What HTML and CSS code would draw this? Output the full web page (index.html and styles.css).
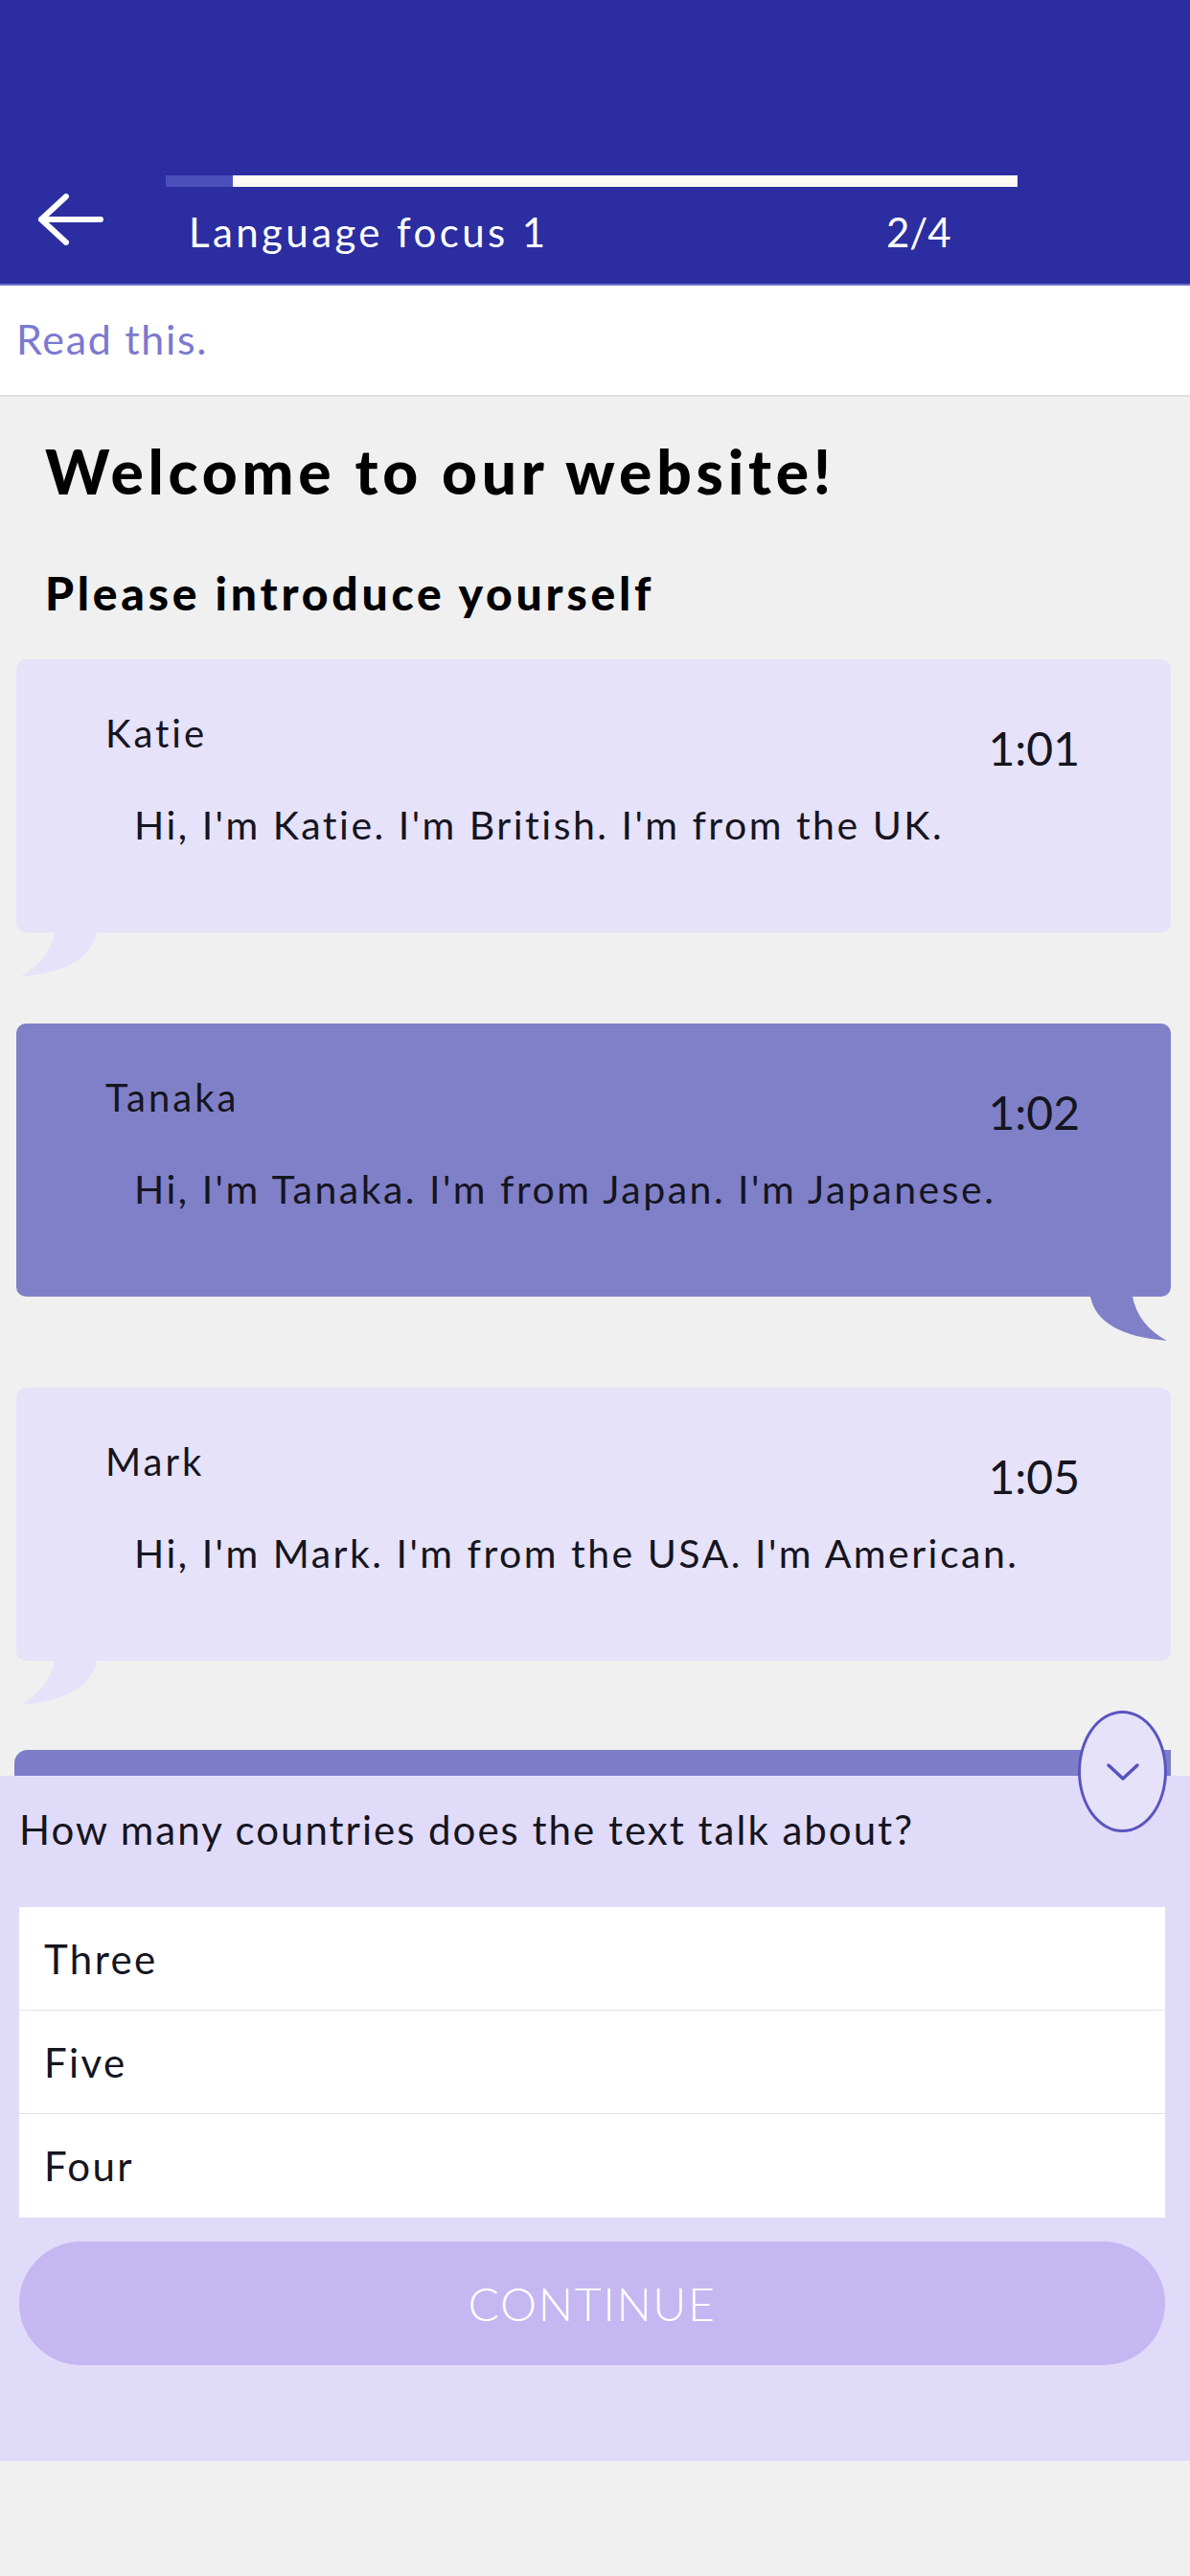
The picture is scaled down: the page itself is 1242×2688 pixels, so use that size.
FILE: index.html
```html
<!DOCTYPE html>
<html lang="en">
<head>
  <meta charset="UTF-8">
  <meta name="viewport" content="width=device-width, initial-scale=1.0">
  <title>Language focus 1</title>
  <link rel="stylesheet" href="styles.css">
</head>
<body>
  <header class="topbar">
    <div class="progress">
      <div class="progress-done"></div>
      <div class="progress-rest"></div>
    </div>
    <div class="topbar-row">
      <svg class="back" width="70" height="54" viewBox="0 0 70 54">
        <path d="M66 27 H4 M30 3 L4 27 L30 51" fill="none" stroke="#FFFFFF" stroke-width="6" stroke-linecap="round" stroke-linejoin="round"/>
      </svg>
      <span class="topbar-title">Language focus 1</span>
      <span class="topbar-count">2/4</span>
    </div>
  </header>

  <div class="instruction">Read this.</div>

  <main class="content">
    <h1>Welcome to our website!</h1>
    <h2>Please introduce yourself</h2>

    <div class="chat">
      <div class="bubble">
        <div class="bubble-head">
          <span class="name">Katie</span>
          <span class="time">1:01</span>
        </div>
        <p class="message">Hi, I'm Katie. I'm British. I'm from the UK.</p>
        <svg class="tail tail-left" width="84" height="48" viewBox="0 0 84 48">
          <path d="M0 0 Q 8 40 80 46 Q 50 30 44 0 Z" fill="#E6E2FA"/>
        </svg>
      </div>

      <div class="bubble bubble-me">
        <div class="bubble-head">
          <span class="name">Tanaka</span>
          <span class="time">1:02</span>
        </div>
        <p class="message">Hi, I'm Tanaka. I'm from Japan. I'm Japanese.</p>
        <svg class="tail tail-right" width="84" height="48" viewBox="0 0 84 48">
          <path d="M0 0 Q 8 40 80 46 Q 50 30 44 0 Z" fill="#8080C8"/>
        </svg>
      </div>

      <div class="bubble">
        <div class="bubble-head">
          <span class="name">Mark</span>
          <span class="time">1:05</span>
        </div>
        <p class="message">Hi, I'm Mark. I'm from the USA. I'm American.</p>
        <svg class="tail tail-left" width="84" height="48" viewBox="0 0 84 48">
          <path d="M0 0 Q 8 40 80 46 Q 50 30 44 0 Z" fill="#E6E2FA"/>
        </svg>
      </div>
    </div>
  </main>

  <section class="quiz">
    <div class="quiz-handle"></div>
    <button class="quiz-toggle">
      <svg width="40" height="24" viewBox="0 0 40 24">
        <path d="M5 5 L20 19 L35 5" fill="none" stroke="#5652BF" stroke-width="3.5" stroke-linecap="round" stroke-linejoin="round"/>
      </svg>
    </button>
    <div class="quiz-body">
      <p class="question">How many countries does the text talk about?</p>
      <ul class="options">
        <li>Three</li>
        <li>Five</li>
        <li>Four</li>
      </ul>
      <button class="continue">CONTINUE</button>
    </div>
  </section>
</body>
</html>
```

FILE: styles.css
```css
body {
  margin: 0;
  font-family: Lato, "Liberation Sans", sans-serif;
  background-color: #F0F0F0;
  color: #15151F;
}

.topbar {
  box-sizing: border-box;
  height: 298px;
  padding-top: 183px;
  background-color: #2B2DA1;
  border-bottom: 2px solid #6F70C9;
  color: #FFFFFF;
}

.progress {
  display: flex;
  width: 889px;
  height: 12px;
  margin-left: 173px;
}

.progress-done {
  width: 70px;
  background-color: #4B4FBB;
}

.progress-rest {
  flex: 1;
  background-color: #FAFAF2;
}

.topbar-row {
  display: flex;
  align-items: flex-start;
  margin-top: 7px;
}

.back {
  margin-left: 39px;
}

.topbar-title,
.topbar-count {
  font-size: 42px;
  line-height: 50px;
  margin-top: 15px;
}

.topbar-title {
  width: 728px;
  margin-left: 88px;
  letter-spacing: 3.4px;
}

.instruction {
  box-sizing: border-box;
  height: 116px;
  padding: 31px 0 0 17px;
  background-color: #FFFFFF;
  border-bottom: 2px solid #E0E0E0;
  color: #7B79CF;
  font-size: 43px;
  line-height: 50px;
  letter-spacing: 1.7px;
}

.content {
  padding: 40px 20px 0 17px;
}

h1 {
  margin: 0 0 0 30px;
  font-size: 64px;
  line-height: 76px;
  font-weight: 900;
  letter-spacing: 4.8px;
  color: #000000;
}

h2 {
  margin: 60px 0 0 30px;
  font-size: 48px;
  line-height: 58px;
  font-weight: 900;
  letter-spacing: 3.8px;
  color: #000000;
}

.chat {
  display: flex;
  flex-direction: column;
  gap: 95px;
  margin-top: 40px;
}

.bubble {
  position: relative;
  box-sizing: border-box;
  height: 285px;
  padding: 53px 95px 0 93px;
  background-color: #E6E2FA;
  border-radius: 10px;
}

.bubble-me {
  background-color: #8080C8;
}

.bubble-head {
  display: flex;
  justify-content: space-between;
  align-items: flex-start;
  height: 68px;
}

.name {
  font-size: 40px;
  line-height: 48px;
  letter-spacing: 3px;
}

.time {
  margin-top: 11px;
  font-size: 48px;
  line-height: 58px;
}

.message {
  margin: 27px 0 0 30px;
  font-size: 41px;
  line-height: 50px;
  letter-spacing: 2.5px;
}

.tail {
  position: absolute;
  top: 100%;
}

.tail-right {
  right: 0;
}

.tail-left {
  left: 0;
  transform: scaleX(-1);
}

.quiz {
  position: relative;
  margin-top: 93px;
}

.quiz-handle {
  height: 27px;
  margin: 0 20px 0 15px;
  background-color: #7D7DCA;
  border-radius: 14px 0 0 0;
}

.quiz-toggle {
  position: absolute;
  top: -41px;
  right: 24px;
  box-sizing: border-box;
  width: 93px;
  height: 127px;
  padding: 0;
  display: flex;
  align-items: center;
  justify-content: center;
  background-color: #E6E2FA;
  border: 3px solid #5A55C0;
  border-radius: 50%;
}

.quiz-body {
  padding: 31px 26px 100px 20px;
  background-color: #E1DBFA;
}

.question {
  margin: 0;
  font-size: 42px;
  line-height: 50px;
  letter-spacing: 2px;
}

.options {
  list-style: none;
  margin: 56px 0 0 0;
  padding: 0;
  background-color: #FFFFFF;
}

.options li {
  box-sizing: border-box;
  display: flex;
  align-items: center;
  height: 108px;
  padding-left: 26px;
  font-size: 42px;
  letter-spacing: 2.4px;
  border-bottom: 1px solid #E4E3EE;
}

.options li:last-child {
  border-bottom: none;
}

.continue {
  display: block;
  width: 100%;
  height: 129px;
  margin-top: 25px;
  border: none;
  border-radius: 65px;
  background-color: #C4B7F2;
  color: #FFFFFF;
  font-family: Lato, "Liberation Sans", sans-serif;
  font-size: 48px;
  font-weight: 300;
  letter-spacing: 1.7px;
}
```
